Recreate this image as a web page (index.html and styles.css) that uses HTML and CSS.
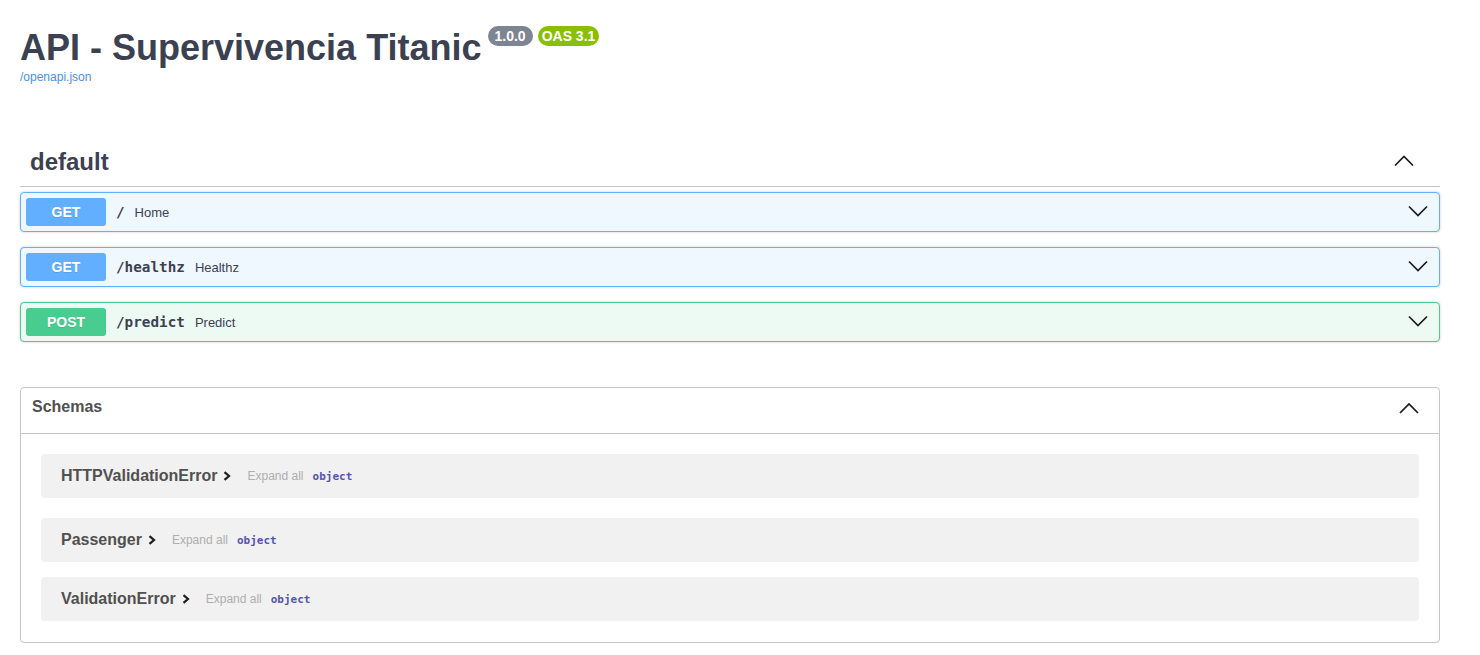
FILE: index.html
```html
<!DOCTYPE html>
<html lang="es">
<head>
<meta charset="utf-8">
<title>API - Supervivencia Titanic</title>
<link rel="stylesheet" href="styles.css">
</head>
<body>
<div class="wrapper">
  <section class="info">
    <h2 class="title">
      <span class="title-text">API - Supervivencia Titanic</span>
      <span class="badge badge-version">1.0.0</span>
      <span class="badge badge-oas">OAS 3.1</span>
    </h2>
    <a class="spec-link" href="#">/openapi.json</a>
  </section>

  <section class="tag-section">
    <div class="tag-header">
      <h3 class="tag-name">default</h3>
      <svg class="tag-arrow" width="20" height="20" viewBox="0 0 20 20"><polyline points="1,13.5 10,4.5 19,13.5" /></svg>
    </div>

    <div class="opblock opblock-get">
      <div class="opblock-summary">
        <span class="method">GET</span>
        <span class="path">/</span>
        <span class="desc">Home</span>
        <svg class="op-arrow" width="20" height="20" viewBox="0 0 20 20"><polyline points="1,4.5 10,13.5 19,4.5" /></svg>
      </div>
    </div>

    <div class="opblock opblock-get">
      <div class="opblock-summary">
        <span class="method">GET</span>
        <span class="path">/healthz</span>
        <span class="desc">Healthz</span>
        <svg class="op-arrow" width="20" height="20" viewBox="0 0 20 20"><polyline points="1,4.5 10,13.5 19,4.5" /></svg>
      </div>
    </div>

    <div class="opblock opblock-post">
      <div class="opblock-summary">
        <span class="method">POST</span>
        <span class="path">/predict</span>
        <span class="desc">Predict</span>
        <svg class="op-arrow" width="20" height="20" viewBox="0 0 20 20"><polyline points="1,4.5 10,13.5 19,4.5" /></svg>
      </div>
    </div>
  </section>

  <section class="models">
    <div class="models-header">
      <h4 class="models-title">Schemas</h4>
      <svg class="models-arrow" width="20" height="25" viewBox="0 0 20 25"><polyline points="1,15 10,6 19,15" /></svg>
    </div>
    <div class="model-list">
      <div class="model-container">
        <span class="model-name">HTTPValidationError</span>
        <svg class="model-chevron" width="8" height="10" viewBox="0 0 8 10"><polyline points="1.5,1.2 6,5 1.5,8.8" /></svg>
        <span class="expand-all">Expand all</span>
        <span class="model-type">object</span>
      </div>
      <div class="model-container">
        <span class="model-name">Passenger</span>
        <svg class="model-chevron" width="8" height="10" viewBox="0 0 8 10"><polyline points="1.5,1.2 6,5 1.5,8.8" /></svg>
        <span class="expand-all">Expand all</span>
        <span class="model-type">object</span>
      </div>
      <div class="model-container">
        <span class="model-name">ValidationError</span>
        <svg class="model-chevron" width="8" height="10" viewBox="0 0 8 10"><polyline points="1.5,1.2 6,5 1.5,8.8" /></svg>
        <span class="expand-all">Expand all</span>
        <span class="model-type">object</span>
      </div>
    </div>
  </section>
</div>
</body>
</html>
```

FILE: styles.css
```css
* { box-sizing: border-box; }

html, body {
  margin: 0;
  padding: 0;
  background: #fff;
  font-family: "Liberation Sans", Arial, sans-serif;
  color: #3b4151;
}

.wrapper {
  width: 1460px;
  padding: 0 20px;
}

/* ---------- info ---------- */
.info {
  padding-top: 27px;
}

.title {
  display: flex;
  align-items: flex-start;
  margin: 0;
  font-size: 36px;
  line-height: 41px;
  font-weight: 700;
  color: #3b4151;
}

.badge {
  margin-top: -1px;
  height: 20px;
  padding: 2px 4px;
  border-radius: 57px;
  font-size: 14px;
  line-height: 16px;
  font-weight: 700;
  color: #fff;
}

.badge-version {
  margin-left: 6px;
  padding: 2px 7px;
  background: #7d8492;
}

.badge-oas {
  margin-left: 5px;
  padding: 2px 4px;
  background: #89bf04;
}

.spec-link {
  display: block;
  margin-top: 2px;
  font-size: 12px;
  line-height: 14px;
  color: #4990e2;
  text-decoration: none;
}

/* ---------- tag section ---------- */
.tag-section {
  display: flow-root;
  margin-top: 53px;
}

.tag-header {
  display: flex;
  align-items: center;
  justify-content: space-between;
  padding: 10px 20px 10px 10px;
  border-bottom: 1px solid rgba(59, 65, 81, .3);
  margin-bottom: 5px;
}

.tag-name {
  margin: 0;
  font-size: 24px;
  line-height: 29px;
  font-weight: 700;
  color: #3b4151;
}

.tag-arrow {
  margin-right: 6px;
  fill: none;
  stroke: #1b1b1b;
  stroke-width: 1.7;
}

.opblock {
  margin-bottom: 15px;
  border: 1px solid;
  border-radius: 4px;
  box-shadow: 0 0 3px rgba(0, 0, 0, .19);
}

.opblock-get {
  border-color: #61affe;
  background: #eff7ff;
}

.opblock-post {
  border-color: #49cc90;
  background: #edfaf4;
}

.opblock-summary {
  display: flex;
  align-items: center;
  padding: 5px;
}

.method {
  width: 80px;
  padding: 6px 0;
  border-radius: 3px;
  font-size: 14px;
  line-height: 16px;
  font-weight: 700;
  text-align: center;
  color: #fff;
  text-shadow: 0 1px 0 rgba(0, 0, 0, .1);
}

.opblock-get .method { background: #61affe; }
.opblock-post .method { background: #49cc90; }

.path {
  padding: 0 10px;
  font-family: "DejaVu Sans Mono", "Liberation Mono", monospace;
  font-size: 14.3px;
  font-weight: 700;
  color: #3b4151;
}

.desc {
  flex: 1;
  font-size: 13px;
  color: #3b4151;
}

.op-arrow {
  margin-right: 6px;
  fill: none;
  stroke: #1b1b1b;
  stroke-width: 1.7;
}

/* ---------- models ---------- */
.models {
  margin-top: 30px;
  border: 1px solid rgba(59, 65, 81, .3);
  border-radius: 4px;
  padding-bottom: 21px;
}

.models-header {
  display: flex;
  align-items: flex-start;
  justify-content: space-between;
  padding: 10px 20px 10px 10px;
  border-bottom: 1px solid rgba(59, 65, 81, .3);
}

.models-title {
  margin: 0 0 0 1px;
  font-size: 16px;
  line-height: 18px;
  font-weight: 700;
  color: #505050;
}

.models-arrow {
  fill: none;
  stroke: #1b1b1b;
  stroke-width: 1.7;
}

.model-list {
  padding-top: 20px;
}

.model-container {
  display: flex;
  align-items: center;
  height: 44px;
  margin: 0 20px 15px;
  padding: 0 20px;
  border-radius: 4px;
  background: rgba(0, 0, 0, .055);
}

.model-container:first-child {
  margin-bottom: 20px;
}

.model-container:last-child {
  margin-bottom: 0;
}

.model-name {
  font-size: 16px;
  font-weight: 700;
  color: #505050;
}

.model-chevron {
  margin-left: 6px;
  fill: none;
  stroke: #1e1e1e;
  stroke-width: 2.2;
}

.expand-all {
  margin-left: 16px;
  font-size: 12px;
  color: #afaeae;
}

.model-type {
  margin-left: 9px;
  font-family: "DejaVu Sans Mono", "Liberation Mono", monospace;
  font-size: 11px;
  font-weight: 600;
  color: #55a;
}
```
